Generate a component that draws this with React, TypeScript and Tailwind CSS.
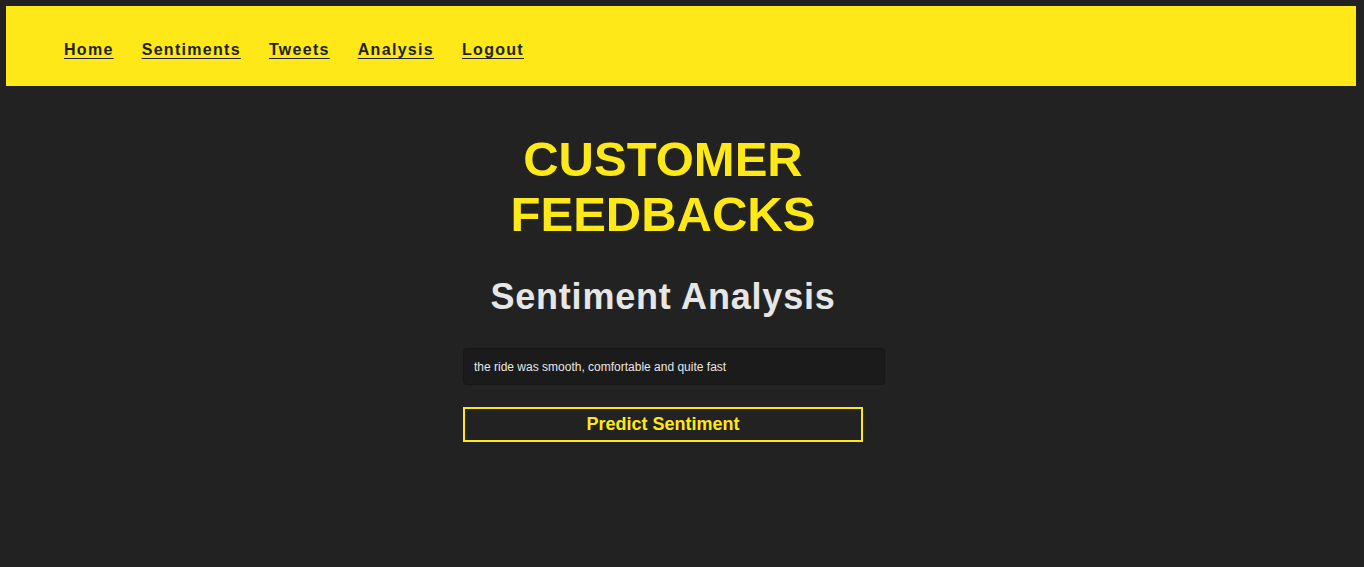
import { useState } from "react";

const links = ["Home", "Sentiments", "Tweets", "Analysis", "Logout"];

export default function App() {
  const [text, setText] = useState("the ride was smooth, comfortable and quite fast");

  return (
    <div className="min-h-screen bg-[#222222] pt-[6px] pl-[6px] pr-[8px] font-['Liberation_Sans',Arial,sans-serif]">
      <nav className="h-[80px] bg-[#ffe817] flex items-center gap-[28px] px-[58px] pt-[8px]">
        {links.map((l) => (
          <a key={l} href="#" className="text-[16px] font-bold tracking-[1.3px] text-[#222222] underline underline-offset-[3px]">
            {l}
          </a>
        ))}
      </nav>

      <div className="flex justify-center pr-[36px]">
        <div className="w-[400px] flex flex-col items-center pt-[46px]">
          <h1 className="text-[49px] font-bold leading-[55px] text-[#ffe817] text-center">
            CUSTOMER FEEDBACKS
          </h1>
          <h2 className="mt-[34px] text-[36px] leading-[42px] font-bold tracking-[0.8px] text-[#e6e6e6] whitespace-nowrap">
            Sentiment Analysis
          </h2>
          <input
            value={text}
            onChange={(e) => setText(e.target.value)}
            className="mt-[30px] w-[422px] self-start h-[37px] px-[10px] bg-[#1b1b1b] border border-[#161616] rounded-[4px] text-[12px] text-[#e6e6e6] outline-none"
          />
          <button className="mt-[22px] w-[400px] h-[35px] border-2 border-[#ffe817] text-[#ffe817] text-[18px] font-bold">
            Predict Sentiment
          </button>
        </div>
      </div>
    </div>
  );
}
